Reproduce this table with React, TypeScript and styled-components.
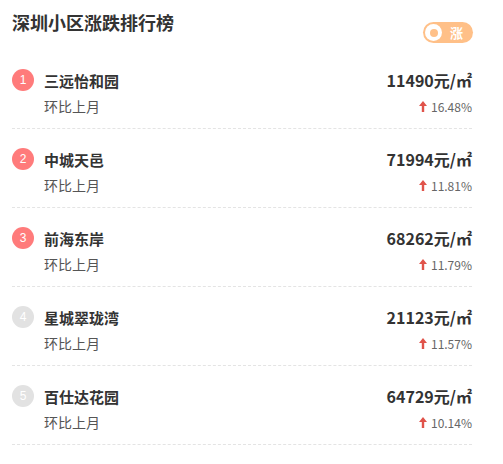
import React from "react";
import styled, { createGlobalStyle } from "styled-components";

const Global = createGlobalStyle`
  html, body { margin: 0; padding: 0; background: #fff; }
  body { font-family: "Noto Sans CJK SC", "Noto Sans", sans-serif; color: #333; }
`;

const Page = styled.div`
  width: 460px;
  margin-left: 12px;
`;

const Header = styled.div`
  display: flex;
  justify-content: space-between;
  align-items: flex-start;
  height: 50px;
  padding-top: 12px;
  box-sizing: border-box;
`;

const Title = styled.h1`
  margin: 0;
  font-size: 18px;
  line-height: 20px;
  font-weight: 700;
  color: #333;
`;

const Toggle = styled.div`
  margin-top: 10px;
  margin-right: -1px;
  width: 50px;
  height: 21px;
  border-radius: 11px;
  background: #ffc088;
  display: flex;
  align-items: center;
  padding: 0 2px;
  box-sizing: border-box;
  gap: 8px;
`;

const Knob = styled.span`
  width: 17px;
  height: 17px;
  border-radius: 50%;
  background: #fff;
  display: flex;
  align-items: center;
  justify-content: center;
  &::after {
    content: "";
    width: 8px;
    height: 8px;
    border-radius: 50%;
    background: #ffc088;
  }
`;

const ToggleText = styled.span`
  color: #fff;
  font-size: 13px;
  line-height: 1;
  font-weight: 700;
`;

const Row = styled.div`
  padding: 19px 0 12px;
  border-bottom: 1px dashed #e4e4e4;
  display: flex;
  flex-direction: column;
  gap: 5px;
`;

const Line = styled.div<{ $h: number }>`
  display: flex;
  align-items: center;
  justify-content: space-between;
  height: ${(p) => p.$h}px;
`;

const Left = styled.div`
  display: flex;
  align-items: center;
  gap: 10px;
`;

const Badge = styled.span<{ $top: boolean }>`
  width: 22px;
  height: 22px;
  border-radius: 50%;
  background: ${(p) => (p.$top ? "#ff7b7b" : "#e2e2e2")};
  color: #fff;
  font-family: "Liberation Sans", Arial, sans-serif;
  font-size: 12px;
  display: flex;
  align-items: center;
  justify-content: center;
`;

const Name = styled.span`
  font-size: 15px;
  font-weight: 700;
  color: #333;
`;

const Price = styled.span`
  font-size: 16px;
  font-weight: 700;
  color: #333;
`;

const Sub = styled.span`
  margin-left: 32px;
  font-size: 14px;
  color: #555;
`;

const Change = styled.span`
  display: flex;
  align-items: center;
  gap: 4px;
  font-size: 12px;
  color: #666;
`;

const Arrow = () => (
  <svg width="8" height="11" viewBox="0 0 8 11">
    <path d="M4 0 L8 5 L5.2 5 L5.2 11 L2.8 11 L2.8 5 L0 5 Z" fill="#e0534a" />
  </svg>
);

const data = [
  { name: "三远怡和园", price: "11490", pct: "16.48%" },
  { name: "中城天邑", price: "71994", pct: "11.81%" },
  { name: "前海东岸", price: "68262", pct: "11.79%" },
  { name: "星城翠珑湾", price: "21123", pct: "11.57%" },
  { name: "百仕达花园", price: "64729", pct: "10.14%" },
];

export default function App() {
  return (
    <Page>
      <Global />
      <Header>
        <Title>深圳小区涨跌排行榜</Title>
        <Toggle>
          <Knob />
          <ToggleText>涨</ToggleText>
        </Toggle>
      </Header>
      {data.map((d, i) => (
        <Row key={d.name}>
          <Line $h={22}>
            <Left>
              <Badge $top={i < 3}>{i + 1}</Badge>
              <Name>{d.name}</Name>
            </Left>
            <Price>{d.price}元/㎡</Price>
          </Line>
          <Line $h={20}>
            <Sub>环比上月</Sub>
            <Change>
              <Arrow />
              {d.pct}
            </Change>
          </Line>
        </Row>
      ))}
    </Page>
  );
}
